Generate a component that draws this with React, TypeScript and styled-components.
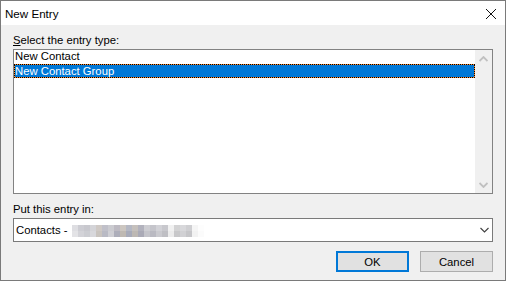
import { FC } from "react";
import styled, { createGlobalStyle } from "styled-components";

const GlobalStyle = createGlobalStyle`
  html, body {
    margin: 0;
    padding: 0;
    background: #ffffff;
  }
  body {
    font-family: "Segoe UI", "Liberation Sans", Arial, sans-serif;
    font-size: 11.3px;
    color: #000000;
  }
`;

const Window = styled.div`
  box-sizing: border-box;
  width: 506px;
  height: 281px;
  border: 1px solid #7a7a7a;
  display: flex;
  flex-direction: column;
  background: #f0f0f0;
`;

const TitleBar = styled.div`
  height: 24px;
  flex: none;
  display: flex;
  align-items: center;
  justify-content: space-between;
  padding: 0 8px 0 4px;
  background: #ffffff;
  font-size: 11.6px;
`;

const CloseIcon = styled.svg`
  display: block;
  width: 12px;
  height: 12px;
  margin-top: 1px;
`;

const Body = styled.div`
  flex: 1;
  display: flex;
  flex-direction: column;
  padding: 7px 12px 0 12px;
`;

const Label = styled.div<{ $gap?: number }>`
  height: 16px;
  line-height: 16px;
  margin-top: ${({ $gap }) => $gap ?? 0}px;
  margin-bottom: 1px;
  white-space: nowrap;

  u {
    text-decoration: underline;
    text-underline-offset: 1px;
  }
`;

const ListBox = styled.div`
  box-sizing: border-box;
  height: 145px;
  border: 1px solid #828282;
  background: #ffffff;
  display: flex;
`;

const Rows = styled.div`
  flex: 1;
  display: flex;
  flex-direction: column;
`;

const Row = styled.div<{ $selected?: boolean }>`
  box-sizing: border-box;
  height: 14px;
  line-height: 13px;
  padding-left: 1px;
  white-space: nowrap;
  ${({ $selected }) =>
    $selected &&
    `
    padding-left: 0;
    border: 1px dotted #000000;
    background: #ff8728;
    color: #ffffff;
  `}
`;

const RowFill = styled.div`
  height: 12px;
  background: #0078d7;
  line-height: 12px;
`;

const ScrollBar = styled.div`
  width: 17px;
  flex: none;
  background: #f0f0f0;
  display: flex;
  flex-direction: column;
  justify-content: space-between;
`;

const ScrollButton = styled.div`
  height: 17px;
  display: flex;
  align-items: center;
  justify-content: center;
`;

const ComboBox = styled.div`
  box-sizing: border-box;
  height: 24px;
  border: 1px solid #7a7a7a;
  background: #ffffff;
  display: flex;
  align-items: center;
  padding: 0 3px 0 2px;
`;

const ComboText = styled.div`
  flex: 1;
  display: flex;
  align-items: center;
  white-space: nowrap;
`;

const Blur = styled.div`
  display: grid;
  grid-template-columns: repeat(22, 6px);
  grid-auto-rows: 6px;
  margin-left: 5px;
  margin-top: 1px;
`;

const Pixel = styled.span<{ $c: string }>`
  background: ${({ $c }) => $c};
`;

const Buttons = styled.div`
  display: flex;
  justify-content: flex-end;
  gap: 11px;
  margin-top: 9px;
`;

const Button = styled.div<{ $default?: boolean }>`
  box-sizing: border-box;
  width: 73px;
  height: 21px;
  display: flex;
  align-items: center;
  justify-content: center;
  background: #e1e1e1;
  border: ${({ $default }) => ($default ? "2px solid #0078d7" : "1px solid #adadad")};
`;

const topRow = [
  "#dedee2", "#cdcdd3", "#c8c8ce", "#d4d4d8", "#cfc9c5", "#c0c0c9", "#cbcbd0", "#bdbac2",
  "#ccc6c0", "#b5b8c3", "#c5c0bc", "#b2b2bd", "#cdcdd2", "#c5c5cb", "#d2d2d7", "#c8c8cd",
  "#f1f1f1", "#d3d3d4", "#d8d8db", "#cfcfd2", "#f5f5f5", "#fdfdfd",
];
const bottomRow = [
  "#e3e3e6", "#d3d3d8", "#cccdd2", "#d8d8dc", "#c9c4bf", "#b9bac4", "#cfcfd4", "#adaeba",
  "#bfb9b2", "#a8abb9", "#bdb8b3", "#aaaab6", "#c4c4ca", "#babac2", "#cacacf", "#bfbfc4",
  "#ececec", "#c8c8ca", "#d1d1d4", "#c6c6c9", "#f2f2f2", "#fbfbfb",
];

const Chevron: FC<{ up?: boolean; color: string; width?: number }> = ({ up, color, width = 1.4 }) => (
  <svg width="9" height="6" viewBox="0 0 9 6">
    <path
      d={up ? "M0.5 5 L4.5 1 L8.5 5" : "M0.5 1 L4.5 5 L8.5 1"}
      fill="none"
      stroke={color}
      strokeWidth={width}
    />
  </svg>
);

const App: FC = () => {
  return (
    <>
      <GlobalStyle />
      <Window>
        <TitleBar>
          <span>New Entry</span>
          <CloseIcon viewBox="0 0 12 12">
            <path d="M1 1 L11 11 M11 1 L1 11" stroke="#111" strokeWidth="1" fill="none" />
          </CloseIcon>
        </TitleBar>
        <Body>
          <Label>
            <u>S</u>elect the entry type:
          </Label>
          <ListBox>
            <Rows>
              <Row>New Contact</Row>
              <Row $selected>
                <RowFill>New Contact Group</RowFill>
              </Row>
            </Rows>
            <ScrollBar>
              <ScrollButton>
                <Chevron up color="#c0c0c0" width={1.8} />
              </ScrollButton>
              <ScrollButton>
                <Chevron color="#c0c0c0" width={1.8} />
              </ScrollButton>
            </ScrollBar>
          </ListBox>
          <Label $gap={7}>Put this entry in:</Label>
          <ComboBox>
            <ComboText>
              Contacts -
              <Blur>
                {topRow.map((c, i) => (
                  <Pixel key={`t${i}`} $c={c} />
                ))}
                {bottomRow.map((c, i) => (
                  <Pixel key={`b${i}`} $c={c} />
                ))}
              </Blur>
            </ComboText>
            <Chevron color="#404040" width={1.1} />
          </ComboBox>
          <Buttons>
            <Button $default>OK</Button>
            <Button>Cancel</Button>
          </Buttons>
        </Body>
      </Window>
    </>
  );
};

export default App;
